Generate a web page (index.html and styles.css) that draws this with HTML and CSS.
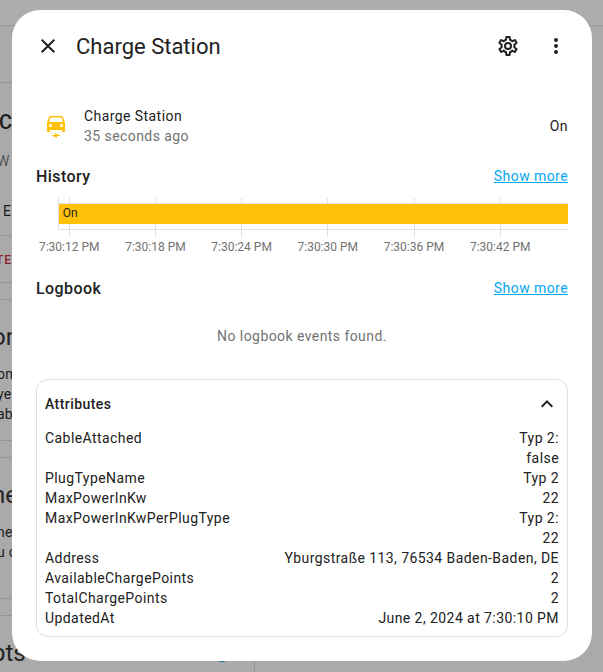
FILE: index.html
```html
<!DOCTYPE html>
<html lang="en">
<head>
<meta charset="utf-8">
<title>Charge Station</title>
<link rel="stylesheet" href="styles.css">
</head>
<body>
<div class="page" aria-hidden="true">
  <div class="strip toolbar"></div>
  <div class="strip tabs"></div>
  <div class="strip intro">
    <div class="intro-title">C</div>
    <div class="intro-sub">W</div>
    <div class="intro-row">E</div>
  </div>
  <div class="strip actions">TE</div>
  <div class="strip gap"></div>
  <div class="strip card">
    <div class="card-title">on</div>
    <p>om<br>ye<br>ab</p>
  </div>
  <div class="strip gap"></div>
  <div class="strip card">
    <div class="card-title">ne</div>
    <p>ne<br>u c</p>
  </div>
  <div class="strip gap"></div>
  <div class="last-card">
    <div class="card-title">pts</div>
    <span class="dot"></span>
  </div>
</div>

<div class="dialog" role="dialog">
  <header class="header">
    <svg class="icon" viewBox="0 0 24 24"><path d="M19,6.41L17.59,5L12,10.59L6.41,5L5,6.41L10.59,12L5,17.59L6.41,19L12,13.41L17.59,19L19,17.59L13.41,12L19,6.41Z"/></svg>
    <h1>Charge Station</h1>
    <svg class="icon" viewBox="0 0 24 24"><path d="M12,8A4,4 0 0,1 16,12A4,4 0 0,1 12,16A4,4 0 0,1 8,12A4,4 0 0,1 12,8M12,10A2,2 0 0,0 10,12A2,2 0 0,0 12,14A2,2 0 0,0 14,12A2,2 0 0,0 12,10M10,22C9.75,22 9.54,21.82 9.5,21.58L9.13,18.93C8.5,18.68 7.96,18.34 7.44,17.94L4.95,18.95C4.73,19.03 4.46,18.95 4.34,18.73L2.34,15.27C2.21,15.05 2.27,14.78 2.46,14.63L4.57,12.97L4.5,12L4.57,11L2.46,9.37C2.27,9.22 2.21,8.95 2.34,8.73L4.34,5.27C4.46,5.05 4.73,4.96 4.95,5.05L7.44,6.05C7.96,5.66 8.5,5.32 9.13,5.07L9.5,2.42C9.54,2.18 9.75,2 10,2H14C14.25,2 14.46,2.18 14.5,2.42L14.87,5.07C15.5,5.32 16.04,5.66 16.56,6.05L19.05,5.05C19.27,4.96 19.54,5.05 19.66,5.27L21.66,8.73C21.79,8.95 21.73,9.22 21.54,9.37L19.43,11L19.5,12L19.43,13L21.54,14.63C21.73,14.78 21.79,15.05 21.66,15.27L19.66,18.73C19.54,18.95 19.27,19.04 19.05,18.95L16.56,17.95C16.04,18.34 15.5,18.68 14.87,18.93L14.5,21.58C14.46,21.82 14.25,22 14,22H10M11.25,4L10.88,6.61C9.68,6.86 8.62,7.5 7.85,8.39L5.44,7.35L4.69,8.65L6.8,10.2C6.4,11.37 6.4,12.64 6.8,13.8L4.68,15.36L5.43,16.66L7.86,15.62C8.63,16.5 9.68,17.14 10.87,17.38L11.24,20H12.76L13.13,17.39C14.32,17.14 15.37,16.5 16.14,15.62L18.57,16.66L19.32,15.36L17.2,13.81C17.6,12.64 17.6,11.37 17.2,10.2L19.31,8.65L18.56,7.35L16.15,8.39C15.38,7.5 14.32,6.86 13.12,6.62L12.75,4H11.25Z"/></svg>
    <svg class="icon" viewBox="0 0 24 24"><path d="M12,16A2,2 0 0,1 14,18A2,2 0 0,1 12,20A2,2 0 0,1 10,18A2,2 0 0,1 12,16M12,10A2,2 0 0,1 14,12A2,2 0 0,1 12,14A2,2 0 0,1 10,12A2,2 0 0,1 12,10M12,4A2,2 0 0,1 14,6A2,2 0 0,1 12,8A2,2 0 0,1 10,6A2,2 0 0,1 12,4Z"/></svg>
  </header>

  <section class="state">
    <svg class="icon car" viewBox="0 0 24 24"><path d="M18.92 2C18.72 1.42 18.16 1 17.5 1H6.5C5.84 1 5.29 1.42 5.08 2L3 8V16C3 16.55 3.45 17 4 17H5C5.55 17 6 16.55 6 16V15H18V16C18 16.55 18.45 17 19 17H20C20.55 17 21 16.55 21 16V8L18.92 2M6.5 12C5.67 12 5 11.33 5 10.5S5.67 9 6.5 9 8 9.67 8 10.5 7.33 12 6.5 12M17.5 12C16.67 12 16 11.33 16 10.5S16.67 9 17.5 9 19 9.67 19 10.5 18.33 12 17.5 12M5 7L6.5 2.5H17.5L19 7H5M7 20H11V18L17 21H13V23L7 20Z"/></svg>
    <div class="info">
      <div>Charge Station</div>
      <div class="muted">35 seconds ago</div>
    </div>
    <div>On</div>
  </section>

  <section class="section-head"><h2>History</h2><a href="#">Show more</a></section>
  <svg class="chart" viewBox="0 0 532 62">
    <path class="grid" d="M22.5 4V36M33.5 4V43M119.5 4V43M205.5 4V43M291.5 4V43M378.5 4V43M464.5 4V43M22 35.5H532M22 9.5H532"/>
    <rect class="bar" x="23" y="10" width="509" height="20"/>
    <text class="bar-label" x="26.8" y="23">On</text>
    <g class="ticks">
      <text x="33.2" y="57">7:30:12 PM</text>
      <text x="119.5" y="57">7:30:18 PM</text>
      <text x="205.6" y="57">7:30:24 PM</text>
      <text x="291.8" y="57">7:30:30 PM</text>
      <text x="378" y="57">7:30:36 PM</text>
      <text x="464.2" y="57">7:30:42 PM</text>
    </g>
  </svg>

  <section class="section-head logbook"><h2>Logbook</h2><a href="#">Show more</a></section>
  <div class="empty">No logbook events found.</div>

  <section class="attributes">
    <div class="attr-head">
      <h3>Attributes</h3>
      <svg class="icon" viewBox="0 0 24 24"><path d="M7.41,15.41L12,10.83L16.59,15.41L18,14L12,8L6,14L7.41,15.41Z"/></svg>
    </div>
    <dl>
      <div><dt>CableAttached</dt><dd>Typ 2:<br>false</dd></div>
      <div><dt>PlugTypeName</dt><dd>Typ 2</dd></div>
      <div><dt>MaxPowerInKw</dt><dd>22</dd></div>
      <div><dt>MaxPowerInKwPerPlugType</dt><dd>Typ 2:<br>22</dd></div>
      <div><dt>Address</dt><dd>Yburgstraße 113, 76534 Baden-Baden, DE</dd></div>
      <div><dt>AvailableChargePoints</dt><dd>2</dd></div>
      <div><dt>TotalChargePoints</dt><dd>2</dd></div>
      <div><dt>UpdatedAt</dt><dd>June 2, 2024 at 7:30:10 PM</dd></div>
    </dl>
  </section>
</div>
</body>
</html>
```
FILE: styles.css
```css
* { box-sizing: border-box; }
html, body { height: 100%; }
body {
  margin: 0;
  overflow: hidden;
  position: relative;
  background: #aaa;
  color: #212121;
  font: 14px/20px Roboto, "Liberation Sans", sans-serif;
  letter-spacing: 0.25px;
}
h1, h2, h3, p, dl, dd { margin: 0; }

/* Dimmed page behind the dialog */
.page { height: 672px; overflow: hidden; white-space: nowrap; color: #1b1b1b; }
.strip { border-bottom: 1px solid #969696; width: 300px; display: flow-root; }
.toolbar { height: 26px; width: 100%; background: #adadad; }
.tabs { height: 57px; }
.intro { height: 153px; }
.intro-title { margin: 27px 0 0 -1px; font: 500 20px/24px Roboto, sans-serif; }
.intro-sub { margin: 17px 0 0 -3px; color: #555; }
.intro-row { margin: 30px 0 0 3px; }
.actions { height: 47px; padding-top: 14px; color: #8b1f28; font-size: 12px; font-weight: 500; letter-spacing: 1px; text-indent: -4px; }
.gap { height: 17px; }
.card { height: 141px; }
.card-title { margin: 19px 0 0 -8px; font-size: 24px; line-height: 36px; letter-spacing: 0; color: #222; }
.card p { margin: 9px 0 0 -3px; }
.last-card { display: flex; width: 255px; height: 56px; border-right: 1px solid #969696; }
.last-card .card-title { flex: 1; }
.dot { width: 18px; height: 18px; margin: 28px 23px 0 0; border-radius: 50%; background: #066a9b; }

.dialog {
  position: absolute;
  left: 12px;
  top: 10px;
  width: 580px;
  height: 651px;
  padding: 12px 24px 24px;
  border-radius: 28px;
  background: #fff;
}
.icon { flex: none; width: 24px; height: 24px; fill: #212121; }
.header { display: flex; align-items: center; height: 48px; gap: 24px; }
.header h1 { flex: 1; margin-left: -8px; padding-top: 2px; font-size: 22px; line-height: 28px; font-weight: 400; letter-spacing: 0; }

.state { display: flex; align-items: center; height: 40px; margin-top: 36px; padding-left: 8px; }
.state .car { margin-top: 2px; fill: #ffc107; }
.info { flex: 1; margin-left: 16px; }
.state, .empty, dl { letter-spacing: 0.43px; }
.muted, .empty { color: #727272; }

.section-head { display: flex; justify-content: space-between; height: 24px; line-height: 24px; margin-top: 18px; }
.section-head h2 { padding-top: 1px; font-size: 16px; line-height: 24px; font-weight: 500; letter-spacing: 0.43px; }
.section-head a { color: #03a9f4; letter-spacing: 0.43px; }
.chart { display: block; width: 532px; height: 62px; margin-top: 6px; }
.grid { fill: none; stroke: #e0e0e0; }
.bar { fill: #ffc107; }
.bar-label { font-size: 12px; letter-spacing: 0; fill: #212121; }
.ticks { font-size: 12px; letter-spacing: 0; fill: #727272; text-anchor: middle; }
.logbook { margin-top: 20px; }
.empty { margin-top: 26px; text-align: center; }

.attributes { height: 258px; margin-top: 33px; padding: 0 8px; border: 1px solid #e0e0e0; border-radius: 12px; }
.attr-head { display: flex; align-items: center; justify-content: space-between; height: 48px; }
.attr-head h3 { font-size: 14px; font-weight: 500; letter-spacing: 0.43px; }
dl div { display: flex; justify-content: space-between; }
dd { text-align: right; }
```
